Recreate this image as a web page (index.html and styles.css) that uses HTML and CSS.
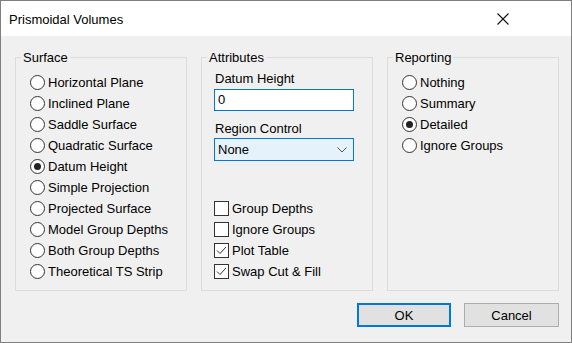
FILE: index.html
```html
<!DOCTYPE html>
<html>
<head>
    <title>Prismoidal Volumes</title>
    <link rel="stylesheet" href="styles.css">
</head>
<body>
    <div class="dialog">
        <div class="titlebar">
            <span class="title">Prismoidal Volumes</span>
            <span class="close">
                <svg width="12" height="12" viewBox="0 0 12 12"><path d="M0.5 0.5 L11.5 11.5 M11.5 0.5 L0.5 11.5" stroke="#111" stroke-width="1.1" fill="none"/></svg>
            </span>
        </div>
        <div class="content">
            <div class="groups">
                <fieldset class="group">
                    <legend>Surface</legend>
                    <div class="options">
                        <div class="option"><span class="radio"></span>Horizontal Plane</div>
                        <div class="option"><span class="radio"></span>Inclined Plane</div>
                        <div class="option"><span class="radio"></span>Saddle Surface</div>
                        <div class="option"><span class="radio"></span>Quadratic Surface</div>
                        <div class="option"><span class="radio checked"></span>Datum Height</div>
                        <div class="option"><span class="radio"></span>Simple Projection</div>
                        <div class="option"><span class="radio"></span>Projected Surface</div>
                        <div class="option"><span class="radio"></span>Model Group Depths</div>
                        <div class="option"><span class="radio"></span>Both Group Depths</div>
                        <div class="option"><span class="radio"></span>Theoretical TS Strip</div>
                    </div>
                </fieldset>
                <fieldset class="group">
                    <legend>Attributes</legend>
                    <div class="attrs">
                        <div class="field-label">Datum Height</div>
                        <div class="textbox">0</div>
                        <div class="field-label second">Region Control</div>
                        <div class="combo">
                            <span>None</span>
                            <svg width="10" height="6" viewBox="0 0 10 6"><path d="M0.5 0.5 L5 5 L9.5 0.5" stroke="#555" stroke-width="1" fill="none"/></svg>
                        </div>
                        <div class="checks">
                            <div class="option"><span class="check"></span>Group Depths</div>
                            <div class="option"><span class="check"></span>Ignore Groups</div>
                            <div class="option"><span class="check"><svg width="11" height="9" viewBox="0 0 11 9"><path d="M1 4.5 L4 7.5 L10 1" stroke="#333" stroke-width="1" fill="none"/></svg></span>Plot Table</div>
                            <div class="option"><span class="check"><svg width="11" height="9" viewBox="0 0 11 9"><path d="M1 4.5 L4 7.5 L10 1" stroke="#333" stroke-width="1" fill="none"/></svg></span>Swap Cut &amp; Fill</div>
                        </div>
                    </div>
                </fieldset>
                <fieldset class="group">
                    <legend>Reporting</legend>
                    <div class="options">
                        <div class="option"><span class="radio"></span>Nothing</div>
                        <div class="option"><span class="radio"></span>Summary</div>
                        <div class="option"><span class="radio checked"></span>Detailed</div>
                        <div class="option"><span class="radio"></span>Ignore Groups</div>
                    </div>
                </fieldset>
            </div>
            <div class="buttons">
                <button class="btn default">OK</button>
                <button class="btn cancel">Cancel</button>
            </div>
        </div>
    </div>
</body>
</html>
```
FILE: styles.css
```css
body {
    margin: 0;
    padding: 0;
    font-family: "Liberation Sans", Arial, sans-serif;
    font-size: 13px;
    color: #000;
    background-color: #f0f0f0;
}
.dialog {
    width: 572px;
    height: 343px;
    box-sizing: border-box;
    border: 1px solid #7f7f7f;
    display: flex;
    flex-direction: column;
    background-color: #f0f0f0;
}
.titlebar {
    height: 35px;
    background-color: #ffffff;
    display: flex;
    align-items: center;
    justify-content: space-between;
    padding: 0 0 0 8px;
}
.title {
    font-size: 13px;
    margin-top: 2px;
}
.close {
    width: 12px;
    height: 12px;
    margin-right: 62px;
    margin-top: 1px;
    display: flex;
}
.content {
    flex: 1;
    padding: 14px 12px 0 14px;
    display: flex;
    flex-direction: column;
}
.groups {
    display: grid;
    grid-template-columns: 172px 172px 172px;
    column-gap: 14px;
    height: 241px;
}
.group {
    margin: 0;
    padding: 0;
    min-width: 0;
    border: 1px solid #dcdcdc;
}
.group legend {
    margin-left: 5px;
    padding: 0 2px;
    line-height: 15px;
}
.options {
    padding: 7px 0 0 14px;
}
.option {
    height: 21px;
    display: flex;
    align-items: center;
    white-space: nowrap;
}
.radio {
    width: 15px;
    height: 15px;
    box-sizing: border-box;
    border: 1px solid #333;
    border-radius: 50%;
    background-color: #fff;
    margin-right: 3px;
    display: flex;
    align-items: center;
    justify-content: center;
    flex-shrink: 0;
}
.radio.checked::after {
    content: "";
    width: 7px;
    height: 7px;
    border-radius: 50%;
    background-color: #222;
}
.attrs {
    padding: 6px 0 0 12px;
}
.field-label {
    line-height: 15px;
    margin-left: 1px;
}
.field-label.second {
    margin-top: 10px;
}
.textbox {
    width: 140px;
    height: 22px;
    box-sizing: border-box;
    margin-top: 3px;
    border: 1px solid #0078d7;
    background-color: #fff;
    padding-left: 3px;
    line-height: 20px;
}
.combo {
    width: 140px;
    height: 23px;
    box-sizing: border-box;
    margin-top: 2px;
    border: 1px solid #0078d7;
    background-color: #e5f1fb;
    padding: 0 6px 0 3px;
    display: flex;
    align-items: center;
    justify-content: space-between;
}
.checks {
    margin-top: 37px;
}
.check {
    width: 15px;
    height: 15px;
    box-sizing: border-box;
    border: 1px solid #333;
    background-color: #fff;
    margin-right: 3px;
    display: flex;
    align-items: center;
    justify-content: center;
    flex-shrink: 0;
}
.buttons {
    display: flex;
    justify-content: flex-end;
    gap: 13px;
    margin-top: 12px;
}
.btn {
    height: 24px;
    box-sizing: border-box;
    font-family: "Liberation Sans", Arial, sans-serif;
    font-size: 13px;
    color: #000;
    background-color: #e1e1e1;
    border: 1px solid #adadad;
    padding: 0;
}
.btn.default {
    width: 94px;
    border: 2px solid #0078d7;
}
.btn.cancel {
    width: 95px;
}
```
